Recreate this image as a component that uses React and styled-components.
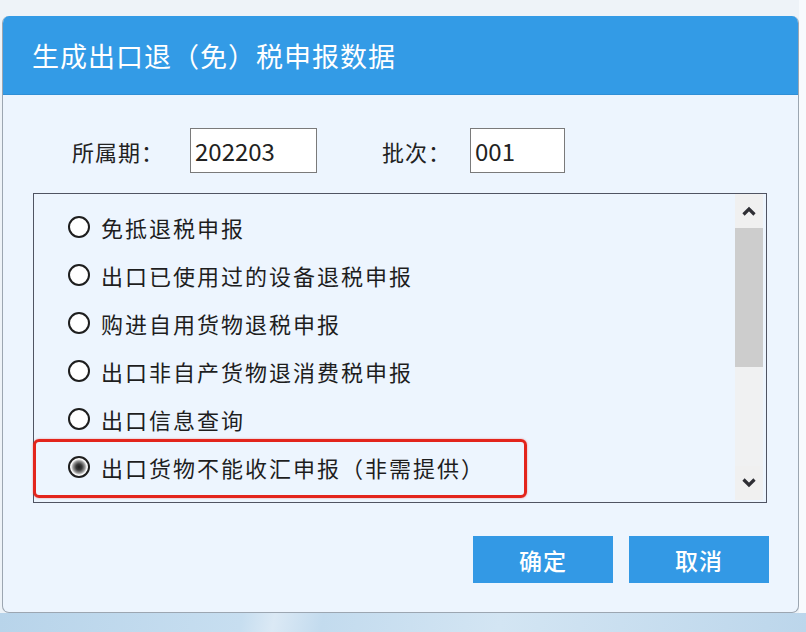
import React from 'react';
import styled, { createGlobalStyle } from 'styled-components';

const GlobalStyle = createGlobalStyle`
  html, body {
    margin: 0;
    padding: 0;
    background: #f3f7fb;
  }
  * {
    box-sizing: border-box;
  }
`;

const FONT = `"Noto Sans CJK SC", "Noto Sans", "Liberation Sans", sans-serif`;

// Page frame around the dialog
const Page = styled.div`
  width: 806px;
  height: 632px;
  display: flex;
  flex-direction: column;
  background: #eef3f8;
  font-family: ${FONT};
  overflow: hidden;
`;

const Stage = styled.div`
  display: flex;
  padding: 16px 0 0 2px;
  background: linear-gradient(to right, #eef3f8 0, #eef3f8 799px, #f7fafd 799px);
`;

const Desktop = styled.div`
  flex: 1;
  background: linear-gradient(100deg, #b8d4ea 0%, #c7def0 30%, #dbe9f5 34%, #c3dbee 40%, #d3e5f3 62%, #bcd6eb 100%);
`;

const Dialog = styled.div`
  width: 797px;
  height: 597px;
  display: flex;
  flex-direction: column;
  background: #edf5fe;
  border: 1px solid #9ca6b1;
  border-top: none;
  border-radius: 7px;
  overflow: hidden;
`;

const TitleBar = styled.div`
  height: 79px;
  margin: 0 -1px;
  display: flex;
  align-items: center;
  padding-left: 30px;
  background: #339be6;
  border-bottom: 1px solid #2f8fd6;
  color: #ffffff;
  font-size: 27px;
  letter-spacing: 1px;
`;

const FieldRow = styled.div`
  display: flex;
  align-items: center;
  height: 45px;
  margin-top: 33px;
  padding-left: 69px;
`;

const Label = styled.span`
  font-size: 22px;
  color: #222;
  margin-left: ${(p) => p.$gap || 0}px;
  margin-right: ${(p) => p.$after || 0}px;
  letter-spacing: 1px;
`;

const Input = styled.div`
  width: ${(p) => p.$width}px;
  height: 45px;
  display: flex;
  align-items: center;
  padding-left: 4px;
  background: #ffffff;
  border: 1px solid #7a7a7a;
  font-size: 24px;
  color: #222;
`;

const ListBox = styled.div`
  width: 734px;
  height: 310px;
  margin: 20px 0 0 30px;
  display: flex;
  background: #edf5fe;
  border: 1px solid #505462;
  padding-right: 3px;
`;

const Items = styled.div`
  flex: 1;
  display: flex;
  flex-direction: column;
  padding: 9px 0 0 34px;
`;

const Item = styled.div`
  position: relative;
  height: 48px;
  display: flex;
  align-items: center;
  gap: 11px;
  font-size: 22px;
  letter-spacing: 2px;
  color: #1e1e1e;

  ${(p) =>
    p.$marked &&
    `
    &::after {
      content: '';
      position: absolute;
      left: -35px;
      top: -4px;
      width: 488px;
      height: 53px;
      border: 3px solid #e3251c;
      border-radius: 6px;
      box-shadow: 0 0 2px rgba(227, 37, 28, 0.5);
    }
  `}
`;

const Radio = styled.span`
  width: 22px;
  height: 22px;
  flex: none;
  border-radius: 50%;
  border: 2px solid #1e1e1e;
  background: ${(p) =>
    p.$checked
      ? 'radial-gradient(circle, #1a1a1a 0, #3a3a3a 3px, #9a9a9a 6px, #ffffff 8px)'
      : '#ffffff'};
`;

const ScrollBar = styled.div`
  width: 28px;
  display: flex;
  flex-direction: column;
  margin-bottom: 2px;
  background: #eeeff0;
`;

const Arrow = styled.div`
  height: 34px;
  display: flex;
  align-items: center;
  justify-content: center;
  background: #f0f0f0;
`;

const Thumb = styled.div`
  height: 139px;
  background: #cdcdcd;
`;

const Track = styled.div`
  flex: 1;
  background: #f0f1f2;
`;

const Buttons = styled.div`
  display: flex;
  justify-content: flex-end;
  gap: 16px;
  margin-top: 33px;
  padding-right: 29px;
`;

const Button = styled.div`
  width: 140px;
  height: 47px;
  display: flex;
  align-items: center;
  justify-content: center;
  background: #3399e5;
  color: #ffffff;
  font-size: 23px;
  font-weight: 500;
  letter-spacing: 1px;
`;

const Chevron = ({ up }) => (
  <svg width="16" height="12" viewBox="0 0 16 12">
    <polyline
      points={up ? '2.5,9.5 8,4 13.5,9.5' : '2.5,2.5 8,8 13.5,2.5'}
      fill="none"
      stroke="#2f2f35"
      strokeWidth="3.2"
    />
  </svg>
);

const options = [
  '免抵退税申报',
  '出口已使用过的设备退税申报',
  '购进自用货物退税申报',
  '出口非自产货物退消费税申报',
  '出口信息查询',
  '出口货物不能收汇申报（非需提供）',
];

const App = () => {
  return (
    <Page>
      <GlobalStyle />
      <Stage>
        <Dialog>
          <TitleBar>生成出口退（免）税申报数据</TitleBar>

          <FieldRow>
            <Label $after={26}>所属期：</Label>
            <Input $width={127}>202203</Input>
            <Label $gap={65} $after={19}>批次：</Label>
            <Input $width={95}>001</Input>
          </FieldRow>

          <ListBox>
            <Items>
              {options.map((text, i) => (
                <Item key={text} $marked={i === options.length - 1}>
                  <Radio $checked={i === options.length - 1} />
                  {text}
                </Item>
              ))}
            </Items>
            <ScrollBar>
              <Arrow>
                <Chevron up />
              </Arrow>
              <Thumb />
              <Track />
              <Arrow>
                <Chevron />
              </Arrow>
            </ScrollBar>
          </ListBox>

          <Buttons>
            <Button>确定</Button>
            <Button>取消</Button>
          </Buttons>
        </Dialog>
      </Stage>
      <Desktop />
    </Page>
  );
};

export default App;
